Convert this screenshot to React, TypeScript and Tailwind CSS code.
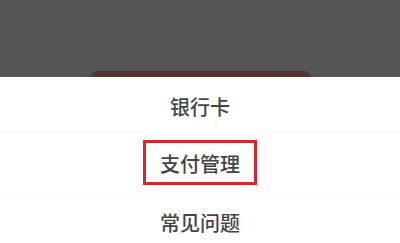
export default function App() {
  return (
    <div className="w-[400px] h-[243px] overflow-hidden flex flex-col bg-white" style={{ fontFamily: '"Noto Sans CJK SC", "Noto Sans", sans-serif' }}>
      <div className="h-[77px] shrink-0 bg-[#555555] flex items-end justify-center">
        <div className="w-[219px] h-[6px] rounded-t-[6px] bg-[#553532]" />
      </div>
      <div className="flex flex-col text-[20px] font-medium text-[#444444] leading-none">
        <div className="h-[55px] flex items-center justify-center pt-[5px]">银行卡</div>
        <div className="h-px bg-[#f5f5f5]" />
        <div className="h-[59px] flex items-center justify-center">
          <div className="w-[114px] h-[45px] border-[3px] border-[#d8262b] flex items-center justify-center pt-[3px]">支付管理</div>
        </div>
        <div className="h-px bg-[#f5f5f5]" />
        <div className="h-[60px] flex items-center justify-center">常见问题</div>
      </div>
    </div>
  );
}
